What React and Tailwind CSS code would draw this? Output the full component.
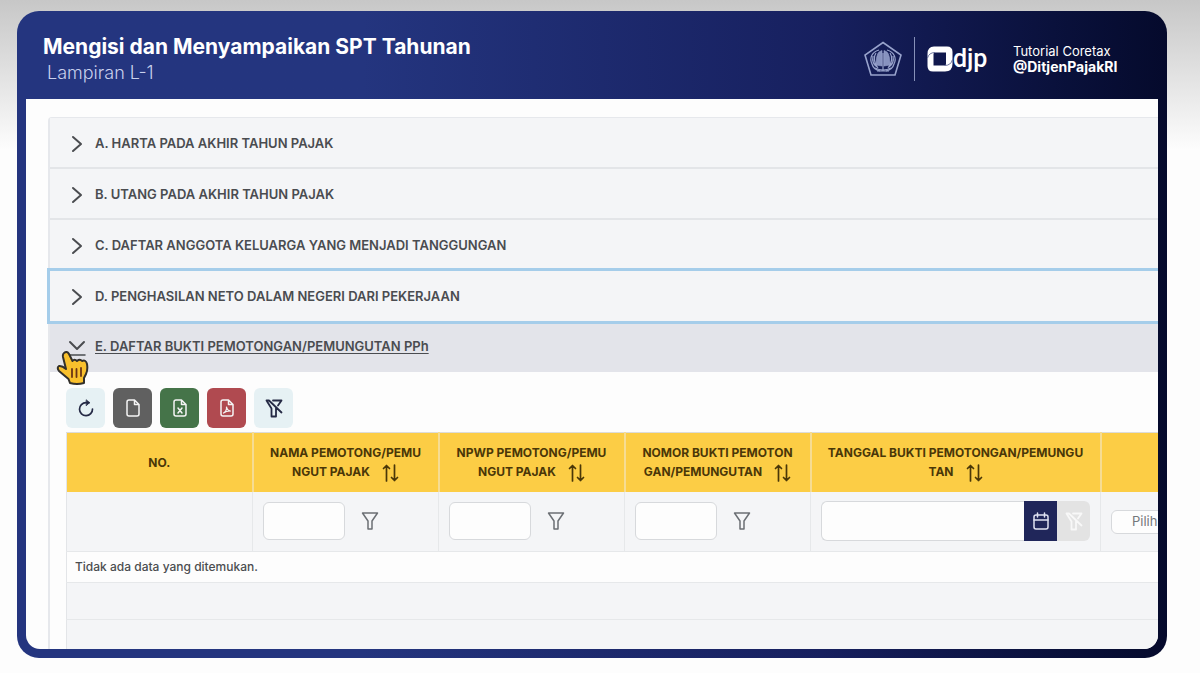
import React from 'react';

const sections = [
  'A. HARTA PADA AKHIR TAHUN PAJAK',
  'B. UTANG PADA AKHIR TAHUN PAJAK',
  'C. DAFTAR ANGGOTA KELUARGA YANG MENJADI TANGGUNGAN',
];

const columns = [
  { name: 'Nama', lines: ['NAMA PEMOTONG/PEMU', 'NGUT PAJAK'] },
  { name: 'NPWP', lines: ['NPWP PEMOTONG/PEMU', 'NGUT PAJAK'] },
  { name: 'Nomor', lines: ['NOMOR BUKTI PEMOTON', 'GAN/PEMUNGUTAN'] },
];

const headCell = 'border-r-2 border-[#f6dc93] px-1 text-center align-middle text-xs leading-[19px] font-bold';
const filterCell = 'border-r border-[#e6e8ea] px-2.5';
const toolButton = 'flex h-10 w-[39px] items-center justify-center rounded-md';

function Emblem() {
  return (
    <svg width="38" height="36" viewBox="0 0 38 36" fill="none" stroke="#98a3cc" strokeWidth="1.2">
      <path d="M19 1.5 L37 14 L31 34 H7 L1 14 Z" strokeWidth="1.6" />
      <path d="M15 9 C8 11 5 17 8 23 C9 27 12 29 16 30 M12 12 C9 16 10 22 14 27 M9 15 C8 20 10 24 13 26" />
      <path d="M23 9 C30 11 33 17 30 23 C29 27 26 29 22 30 M26 12 C29 16 28 22 24 27 M29 15 C30 20 28 24 25 26" />
      <path d="M12 24 C12 18 13 13 15 11 L18 9.5 V25 Z M26 24 C26 18 25 13 23 11 L20 9.5 V25 Z" fill="#8792bf" strokeWidth="0.6" />
      <path d="M11 27 Q19 31 27 27 M13 30 H25 M19 12 V29" />
    </svg>
  );
}

function DjpMark() {
  return (
    <svg width="26" height="26" viewBox="0 0 26 26">
      <path fillRule="evenodd" fill="#fff" d="M7 0.5 H20 Q25.5 0.5 25.5 6 V18 Q25.5 25.5 18 25.5 H6 Q0.5 25.5 0.5 20 V8 Q0.5 0.5 7 0.5 Z M8 6.5 Q6.5 6.5 6.5 8 V19.5 H17.5 Q19 19.5 19 18 V6.5 Z" />
      <path d="M0.5 12 Q2 6.5 8 6.5 M25.5 13.5 Q24 19.5 17.5 19.5" fill="none" stroke="#5c6594" strokeWidth="0.9" />
    </svg>
  );
}

function Funnel() {
  return (
    <svg width="18" height="20" viewBox="0 0 18 20" fill="none" stroke="#6b6f74" strokeWidth="1.5" strokeLinejoin="round">
      <path d="M1.5 2 H16.5 L11 10 V18 H7 V10 Z" />
    </svg>
  );
}

function FunnelSlash() {
  return (
    <svg width="18" height="19" viewBox="0 0 18 19" fill="none" stroke="currentColor" strokeWidth="1.8" strokeLinejoin="round" strokeLinecap="round">
      <path d="M8 1.5 H16.5 L13 6.5 M1.5 1.5 H4 L16.5 13.5 M1.5 1.5 L6.5 9.5 V17.5 H11 V9" />
    </svg>
  );
}

function SortArrows() {
  return (
    <svg className="ml-3 inline-block align-middle" width="17" height="18" viewBox="0 0 17 18" fill="none" stroke="#4a3708" strokeWidth="1.7" strokeLinecap="round" strokeLinejoin="round">
      <path d="M4.5 17 V1.5 M1.5 4.5 L4.5 1.5 L7.5 4.5 M12.5 1 V16.5 M9.5 13.5 L12.5 16.5 L15.5 13.5" />
    </svg>
  );
}

function Refresh() {
  return (
    <svg width="16" height="18" viewBox="0 0 16 18" fill="none" stroke="currentColor" strokeWidth="1.7" strokeLinecap="round" strokeLinejoin="round">
      <path d="M14.5 10 A6.5 6.5 0 1 1 8 3.7 H11" />
      <path d="M8.5 1 L11.5 3.7 L8.5 6.5 Z" fill="currentColor" strokeWidth="0.8" />
    </svg>
  );
}

function FileIcon({ children }) {
  return (
    <svg width="14" height="18" viewBox="0 0 14 18" fill="none" stroke="#f4f4f4" strokeWidth="1.5" strokeLinecap="round" strokeLinejoin="round">
      <path d="M3 1 H8.5 L13 5.5 V15 Q13 17 11 17 H3 Q1 17 1 15 V3 Q1 1 3 1 Z M8.5 1 V5.5 H13" />
      {children}
    </svg>
  );
}

function CalendarIcon() {
  return (
    <svg width="16" height="18" viewBox="0 0 16 18" fill="none" stroke="#dfe2f2" strokeWidth="1.5" strokeLinecap="round">
      <rect x="1" y="3" width="14" height="14" rx="2" />
      <path d="M1 8 H15 M4.5 1 V5 M11.5 1 V5" />
    </svg>
  );
}

function HandCursor() {
  return (
    <svg className="pointer-events-none absolute top-[29px] left-1.5 z-20" width="34" height="36" viewBox="0 0 34 36" strokeLinejoin="round" strokeLinecap="round">
      <path d="M8 3 Q11 0.5 13 4 L16.5 11 Q18.5 8.5 21 11 Q24 8.5 26 11 Q30 9.5 31 14 Q32 20 30 24 L28 28 V33 Q21 35 14 33 L12.5 29 L3 21 Q0.5 17.5 3 16 Q6 15.5 10 19 L7 7 Q6.5 4 8 3 Z" fill="#f9c02c" stroke="#33302b" strokeWidth="2" />
      <path d="M16 19 V27 M20.5 19 V27 M25 18 V26" stroke="#6b3514" strokeWidth="1.8" />
    </svg>
  );
}

function Section({ title, className }) {
  return (
    <button className={`flex w-full items-center gap-2 bg-[#f4f5f7] pt-0.5 pl-4 text-left text-[13px] font-semibold text-[#4a4c50] ${className}`}>
      <svg width="21" height="18" viewBox="0 0 21 18" fill="none" stroke="currentColor" strokeWidth="2" strokeLinecap="round" strokeLinejoin="round">
        <path d="M7 2 L15 9 L7 16" />
      </svg>
      {title}
    </button>
  );
}

export default function App() {
  return (
    <div className="bg-linear-to-b from-[#c7c7c7] via-[#fdfdfd] via-[150px] to-[#fdfdfd] pt-[11px] pr-[33px] pb-4 pl-[17px] font-[Inter,sans-serif]">
      <div className="rounded-[22px] bg-linear-to-r from-[#24357f] from-30% via-[#17205f] via-70% to-[#050a2c] px-[9px] pb-[9px]">
        <header className="flex h-22 items-center pr-[38px] pl-[17px] text-white">
          <div className="flex-1 pt-2">
            <h1 className="text-[21px] leading-7 font-bold">Mengisi dan Menyampaikan SPT Tahunan</h1>
            <p className="pl-1 text-[18px] leading-6 font-light text-[#c9d0ec]">Lampiran L-1</p>
          </div>
          <div className="flex items-center pt-2">
            <Emblem />
            <span className="mx-3 h-11 w-px bg-[#8791b8]" />
            <DjpMark />
            <span className="w-9 font-[Roboto,sans-serif] text-[25px] leading-7 font-medium">djp</span>
            <div className="ml-6 w-[107px]">
              <p className="text-[13px] leading-4">Tutorial Coretax</p>
              <p className="text-sm leading-4 font-bold">@DitjenPajakRI</p>
            </div>
          </div>
        </header>

        <main className="overflow-hidden rounded-b-[14px] bg-[#fdfdfd] pt-[18px] pl-[22px]">
          <div className="rounded-tl border-t border-l-2 border-[#e6e8ec]">
            {sections.map((title) => (
              <Section key={title} title={title} className="h-[51px] border-b-2 border-[#e3e5e8]" />
            ))}
            <Section title="D. PENGHASILAN NETO DALAM NEGERI DARI PEKERJAAN" className="relative z-10 h-[50px] outline-3 outline-[#a5cdea]" />
            <div className="relative">
              <button className="flex h-[51px] w-full items-center gap-2 bg-[#e3e4ea] pl-4 text-left text-[13px] font-semibold text-[#4a4c50]">
                <svg width="21" height="18" viewBox="0 0 21 18" fill="none" stroke="currentColor" strokeWidth="2" strokeLinecap="round" strokeLinejoin="round">
                  <path d="M4 4 L11 11 L18 4" />
                  <path d="M3 17 H19" strokeWidth="1.5" />
                </svg>
                <span className="underline underline-offset-2">E. DAFTAR BUKTI PEMOTONGAN/PEMUNGUTAN PPh</span>
              </button>
              <HandCursor />
            </div>

            <div className="pt-4 pl-4">
              <div className="mb-1 flex gap-2 text-[#252a45]">
                <button aria-label="Muat ulang" className={`${toolButton} bg-[#e6f1f4]`}><Refresh /></button>
                <button aria-label="Ekspor CSV" className={`${toolButton} bg-[#606060]`}><FileIcon /></button>
                <button aria-label="Ekspor Excel" className={`${toolButton} bg-[#457449]`}>
                  <FileIcon><path d="M5 9 L9 14 M9 9 L5 14" /></FileIcon>
                </button>
                <button aria-label="Ekspor PDF" className={`${toolButton} bg-[#b04a50]`}>
                  <FileIcon><path d="M3.5 14 Q7 12 6.5 8 Q7.5 12 10.5 12 Q6 12 3.5 14" strokeWidth="1.2" /></FileIcon>
                </button>
                <button aria-label="Hapus filter" className={`${toolButton} bg-[#e6f1f4]`}><FunnelSlash /></button>
              </div>

              <table className="w-full table-fixed border-collapse border-l border-[#e3e5e8]">
                <colgroup>
                  <col className="w-[186px]" />
                  <col className="w-[186px]" />
                  <col className="w-[186px]" />
                  <col className="w-[186px]" />
                  <col className="w-[290px]" />
                  <col />
                </colgroup>
                <thead>
                  <tr className="h-[59px] border-t border-[#dcdcda] bg-[#fccd45] text-[#4a3708]">
                    <th className={headCell}>NO.</th>
                    {columns.map((col) => (
                      <th key={col.name} className={headCell}>
                        {col.lines[0]}<br />{col.lines[1]}<SortArrows />
                      </th>
                    ))}
                    <th className={headCell}>TANGGAL BUKTI PEMOTONGAN/PEMUNGU<br />TAN<SortArrows /></th>
                    <th aria-label="Status" />
                  </tr>
                </thead>
                <tbody className="bg-[#f4f5f7]">
                  <tr className="h-[60px]">
                    <td className={filterCell} />
                    {columns.map((col) => (
                      <td key={col.name} className={filterCell}>
                        <div className="flex items-center gap-4">
                          <input aria-label={col.name} className="h-[38px] w-[82px] rounded-md border border-[#d7d9dc] bg-[#fdfdfd] px-2 text-xs" />
                          <button aria-label={`Filter ${col.name}`}><Funnel /></button>
                        </div>
                      </td>
                    ))}
                    <td className={filterCell}>
                      <div className="flex h-10">
                        <input aria-label="Tanggal" className="min-w-0 flex-1 rounded-l-md border border-r-0 border-[#d7d9dc] bg-[#fdfdfd] px-2 text-xs" />
                        <button aria-label="Pilih tanggal" className="flex w-[33px] items-center justify-center bg-[#20265a]"><CalendarIcon /></button>
                        <button aria-label="Hapus tanggal" className="flex w-[33px] items-center justify-center rounded-r-md bg-[#e3e3e3] text-[#f8f8f8]"><FunnelSlash /></button>
                      </div>
                    </td>
                    <td className="overflow-hidden pl-2.5">
                      <select aria-label="Pilih" className="h-6 w-40 appearance-none rounded-md border border-[#d7d9dc] bg-[#fdfdfd] pl-5 text-[13px] text-[#74777b]">
                        <option>Pilih</option>
                      </select>
                    </td>
                  </tr>
                  <tr className="h-[31px] border-y border-[#e6e8ea] bg-[#fdfdfd]">
                    <td colSpan={6} className="pl-2 text-xs font-medium text-[#4b4d50]">Tidak ada data yang ditemukan.</td>
                  </tr>
                  <tr className="h-[37px] border-b border-[#e6e8ea]"><td colSpan={6} /></tr>
                  <tr className="h-[29px]"><td colSpan={6} /></tr>
                </tbody>
              </table>
            </div>
          </div>
        </main>
      </div>
    </div>
  );
}
